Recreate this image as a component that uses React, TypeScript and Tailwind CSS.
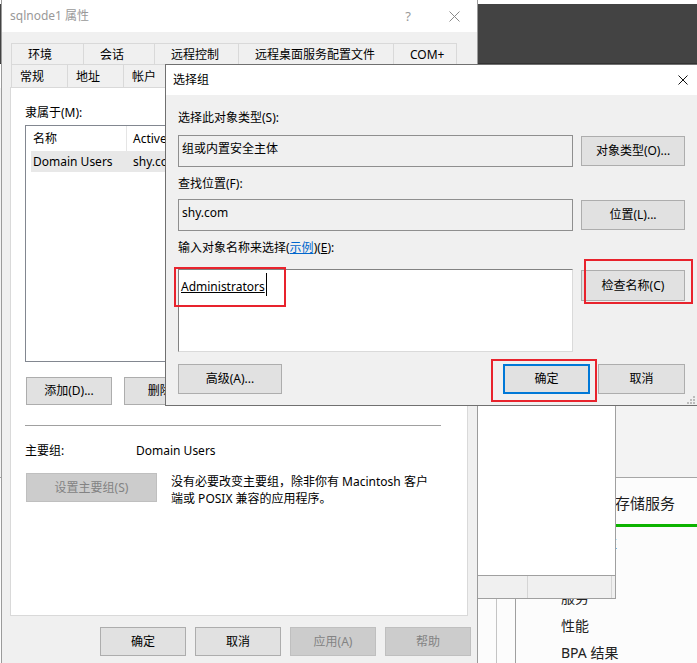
import React from "react";

type BtnProps = {
  label: React.ReactNode;
  className?: string;
  disabled?: boolean;
  focused?: boolean;
};

function WinButton({ label, className = "", disabled = false, focused = false }: BtnProps) {
  let look = "bg-[#e1e1e1] border border-[#adadad] text-black";
  if (disabled) look = "bg-[#cccccc] border border-[#bfbfbf] text-[#838383]";
  if (focused) look = "bg-[#e1e1e1] border-2 border-[#0078d7] text-black";
  return (
    <div
      className={`flex shrink-0 items-center justify-center text-[12px] leading-[16px] ${look} ${className}`}
    >
      {label}
    </div>
  );
}

function CloseX({ color, size }: { color: string; size: number }) {
  return (
    <svg width={size} height={size} viewBox={`0 0 ${size} ${size}`}>
      <line x1="0.5" y1="0.5" x2={size - 0.5} y2={size - 0.5} stroke={color} strokeWidth="1" />
      <line x1={size - 0.5} y1="0.5" x2="0.5" y2={size - 0.5} stroke={color} strokeWidth="1" />
    </svg>
  );
}

const backTabs = [
  { name: "环境", w: "w-[72px]" },
  { name: "会话", w: "w-[71px]" },
  { name: "远程控制", w: "w-[84px]" },
  { name: "远程桌面服务配置文件", w: "w-[155px]" },
  { name: "COM+", w: "w-[63px]" },
];

// only the tabs that peek out from under the select dialog
const frontTabs = [
  { name: "常规", w: "w-[56px]" },
  { name: "地址", w: "w-[56px]" },
  { name: "帐户", w: "w-[56px]" },
];

function ServerManagerBackground() {
  return (
    <div className="absolute inset-0 flex flex-col bg-white">
      <div className="h-[4px] shrink-0 bg-white" />
      <div className="h-[60px] shrink-0 border-b border-[#333333] bg-[#434343]" />
      <div className="flex h-[24px] shrink-0 items-center justify-end pr-[9px]">
        <svg width="12" height="7" viewBox="0 0 12 7">
          <polyline points="0.5,0.5 6,6 11.5,0.5" fill="none" stroke="#333333" strokeWidth="1.2" />
        </svg>
      </div>
      <div className="h-[390px] shrink-0 border-b border-[#a6a6a6] bg-[#f3f3f3]" />
      <div className="flex flex-1 bg-[#fcfcfc]">
        <div className="w-[497px] shrink-0 border-r border-[#c4c4c4]" />
        <div className="ml-[18px] flex flex-1 flex-col border-l border-[#a0a0a0]">
          <div className="flex h-[46px] items-center whitespace-nowrap pl-[54px] pt-[4px] text-[15px] text-[#1e1e1e]">
            文件和存储服务
          </div>
          <div className="h-[3px] bg-[#0db300]" />
          <div className="pl-[45px] pt-[2px] text-[14px] leading-[27.5px] text-[#222222]">
            <div>可管理性</div>
            <div>事件</div>
            <div>服务</div>
            <div>性能</div>
            <div>BPA 结果</div>
          </div>
        </div>
      </div>
    </div>
  );
}

function OtherWindow() {
  return (
    <div className="absolute left-[400px] top-[300px] flex h-[299px] w-[216px] flex-col border-r border-b border-[#a0a0a0]">
      <div className="flex-1 border-b border-[#a0a0a0] bg-white" />
      <div className="flex h-[22px] bg-[#f0f0f0]">
        <div className="w-[128px] border-r border-[#d5d5d5]" />
        <div className="w-[84px] border-r border-[#d5d5d5]" />
      </div>
    </div>
  );
}

function PropertiesDialog() {
  return (
    <div className="absolute left-[1px] top-0 flex h-[663px] w-[477px] flex-col border-x border-[#9b9b9b] bg-[#f0f0f0] text-[12px] leading-[16px]">
      <div className="flex h-[32px] shrink-0 items-center bg-white text-[#999999]">
        <span className="flex-1 pl-[8px]">sqlnode1 属性</span>
        <span className="flex w-[46px] justify-center text-[13px]">?</span>
        <span className="flex w-[46px] justify-center">
          <CloseX color="#8a8a8a" size={11} />
        </span>
      </div>
      <div className="flex-1 pl-[8px] pr-[9px] pt-[11px]">
        <div className="ml-[1px] flex h-[21px] border-l border-[#d9d9d9]">
          {backTabs.map((t) => (
            <div
              key={t.name}
              className={`${t.w} shrink-0 whitespace-nowrap border-t border-r border-[#d9d9d9] pl-[16px] pt-[3px]`}
            >
              {t.name}
            </div>
          ))}
        </div>
        <div className="ml-[1px] flex h-[23px] border-l border-[#d9d9d9]">
          {frontTabs.map((t) => (
            <div
              key={t.name}
              className={`${t.w} shrink-0 whitespace-nowrap border-t border-r border-[#d9d9d9] pl-[8px] pt-[4px]`}
            >
              {t.name}
            </div>
          ))}
        </div>
        <div className="h-[529px] border border-[#d9d9d9] bg-white pl-[14px] pt-[17px]">
          <div>隶属于(M):</div>
          <div className="mt-[4px] h-[237px] w-[428px] border border-[#828790] bg-white">
            <div className="flex h-[25px]">
              <div className="flex w-[101px] items-center border-r border-[#e5e5e5] pl-[7px]">名称</div>
              <div className="flex w-[38px] items-center overflow-hidden whitespace-nowrap pl-[6px]">Active</div>
            </div>
            <div className="ml-[5px] flex h-[21px] w-[134px] items-center bg-[#e8e8e8]">
              <div className="w-[96px] shrink-0 pl-[2px]">Domain Users</div>
              <div className="w-[38px] overflow-hidden whitespace-nowrap pl-[6px]">shy.co</div>
            </div>
          </div>
          <div className="ml-[1px] mt-[15px] flex gap-[12px]">
            <WinButton label="添加(D)..." className="h-[28px] w-[86px]" />
            <WinButton label="删除(R)" className="h-[28px] w-[86px]" />
          </div>
          <div className="mt-[20px] h-px w-[416px] bg-[#a0a0a0]" />
          <div className="mt-[17px] flex">
            <div className="w-[111px]">主要组:</div>
            <div>Domain Users</div>
          </div>
          <div className="mt-[14px] flex">
            <WinButton label="设置主要组(S)" disabled className="ml-[1px] h-[29px] w-[131px]" />
            <div className="ml-[14px] whitespace-nowrap leading-[17px]">
              没有必要改变主要组，除非你有 Macintosh 客户
              <br />
              端或 POSIX 兼容的应用程序。
            </div>
          </div>
        </div>
        <div className="mt-[11px] flex gap-[9px] pl-[90px]">
          <WinButton label="确定" className="h-[29px] w-[86px]" />
          <WinButton label="取消" className="h-[29px] w-[86px]" />
          <WinButton label="应用(A)" disabled className="h-[29px] w-[86px]" />
          <WinButton label="帮助" disabled className="h-[29px] w-[86px]" />
        </div>
      </div>
    </div>
  );
}

function SelectGroupDialog() {
  return (
    <div className="absolute left-[165px] top-[64px] flex h-[342px] w-[533px] flex-col border border-[#707070] bg-[#f0f0f0] text-[12px] leading-[16px] text-black">
      <div className="flex h-[30px] shrink-0 items-center justify-between bg-white pl-[7px] pr-[9px]">
        <span>选择组</span>
        <CloseX color="#111111" size={10} />
      </div>
      <div className="px-[12px] pt-[15px]">
        <div>选择此对象类型(S):</div>
        <div className="mt-[9px] flex items-start gap-[8px]">
          <div className="h-[32px] w-[395px] border border-[#8f8f8f] pl-[3px] pt-[5px]">组或内置安全主体</div>
          <WinButton label="对象类型(O)..." className="mt-[1px] h-[30px] w-[104px]" />
        </div>
        <div className="mt-[9px]">查找位置(F):</div>
        <div className="mt-[7px] flex items-start gap-[8px]">
          <div className="h-[32px] w-[395px] border border-[#8f8f8f] pl-[3px] pt-[5px]">shy.com</div>
          <WinButton label="位置(L)..." className="mt-[1px] h-[30px] w-[104px]" />
        </div>
        <div className="mt-[9px]">
          输入对象名称来选择(<span className="text-[#0066cc] underline">示例</span>)(<span className="underline">E</span>):
        </div>
        <div className="mt-[13px] flex items-start gap-[8px]">
          <div className="h-[83px] w-[395px] border border-t-[#828282] border-l-[#828282] border-r-[#dadada] border-b-[#dadada] bg-white pl-[2px] pt-[3px]">
            <div className="flex items-start">
              <span className="mt-[6px] underline">Administrators</span>
              <div className="ml-px h-[23px] w-px bg-black" />
            </div>
          </div>
          <WinButton label="检查名称(C)" className="mt-[1px] h-[31px] w-[104px]" />
        </div>
        <div className="mt-[12px] flex h-[30px]">
          <WinButton label="高级(A)..." className="h-[30px] w-[104px]" />
          <div className="flex-1" />
          <WinButton label="确定" focused className="h-[30px] w-[87px]" />
          <WinButton label="取消" className="ml-[8px] h-[30px] w-[87px]" />
        </div>
      </div>
      <svg className="absolute bottom-[1px] right-[2px]" width="8" height="8" viewBox="0 0 8 8">
        <rect x="6" y="0" width="2" height="2" fill="#bcbcbc" />
        <rect x="3" y="3" width="2" height="2" fill="#bcbcbc" />
        <rect x="6" y="3" width="2" height="2" fill="#bcbcbc" />
        <rect x="0" y="6" width="2" height="2" fill="#bcbcbc" />
        <rect x="3" y="6" width="2" height="2" fill="#bcbcbc" />
        <rect x="6" y="6" width="2" height="2" fill="#bcbcbc" />
      </svg>
    </div>
  );
}

export default function App() {
  return (
    <div className="relative h-[663px] w-[697px] overflow-hidden bg-white font-[family-name:'Noto_Sans','Noto_Sans_CJK_SC',sans-serif] text-black">
      <ServerManagerBackground />
      <OtherWindow />
      <PropertiesDialog />
      <SelectGroupDialog />
      <div className="absolute left-[174px] top-[267px] h-[40px] w-[112px] border-2 border-[#e8232d]" />
      <div className="absolute left-[584px] top-[259px] h-[45px] w-[109px] border-2 border-[#e8232d]" />
      <div className="absolute left-[491px] top-[359px] h-[43px] w-[106px] border-2 border-[#e8232d]" />
    </div>
  );
}
